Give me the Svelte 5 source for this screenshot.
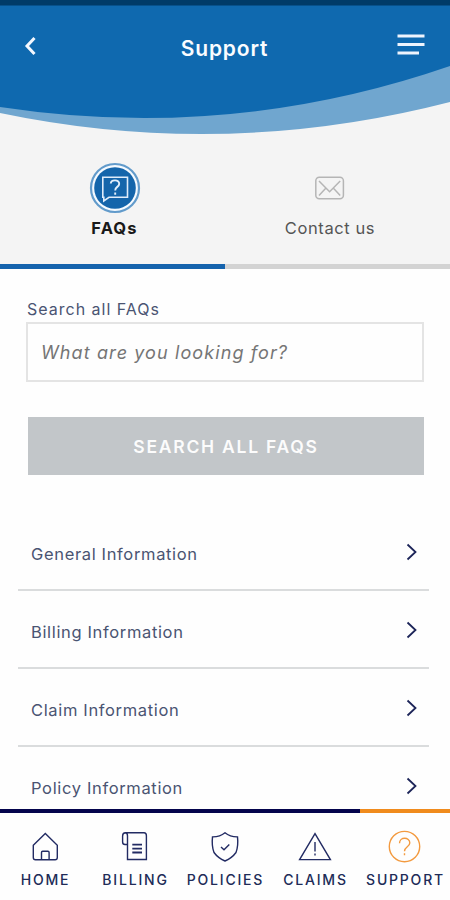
<script>
  const topics = [
    'General Information',
    'Billing Information',
    'Claim Information',
    'Policy Information',
  ]

  const navItems = [
    { id: 'home', label: 'Home' },
    { id: 'billing', label: 'Billing' },
    { id: 'policies', label: 'Policies' },
    { id: 'claims', label: 'Claims' },
    { id: 'support', label: 'Support' },
  ]

  let activeTab = 'faqs'
  let activeNav = 'support'
  let query = ''
</script>

<div class="app">
  <header>
    <svg class="wave" viewBox="0 0 450 140" width="450" height="140">
      <path d="M0 0H450V102Q225 160 0 113Z" fill="#70a6cf" />
      <path d="M0 0H450V66Q230 142 0 107Z" fill="#0f69af" />
      <path d="M0 0H450V5.5H0Z" fill="#003b68" />
    </svg>
    <button class="back" aria-label="Back">
      <svg width="12" height="20" viewBox="0 0 12 20">
        <path d="M10.5 2L3 10L10.5 18" fill="none" stroke="#f4f8ff" stroke-width="3" />
      </svg>
    </button>
    <h1>Support</h1>
    <button class="menu" aria-label="Menu">
      <svg width="28" height="22" viewBox="0 0 28 22">
        <path d="M0.5 3H27.5M0.5 11.5H27.5M0.5 20H22" stroke="#eef4fd" stroke-width="3" />
      </svg>
    </button>
  </header>

  <div class="tabs">
    <button class:active={activeTab === 'faqs'} on:click={() => (activeTab = 'faqs')}>
      <svg width="52" height="52" viewBox="0 0 52 52" fill="none">
        <circle cx="26" cy="26" r="24" fill="#f5faff" stroke="#629bcb" stroke-width="2.2" />
        <circle cx="26" cy="26" r="20.8" fill="#1465ab" />
        <path d="M13.8 15.2H38.5V35.3H20L14.8 39V35.3H13.8Z" stroke="#dfecfa" stroke-width="1.6" />
        <path d="M21.8 21.5C22 17.2 30.4 17.3 30.2 21.9C30 25.3 26.2 24.5 26.2 28.5M26.2 30.6V32.8" stroke="#e4effb" stroke-width="1.9" />
      </svg>
      <span>FAQs</span>
    </button>
    <button class:active={activeTab === 'contact'} on:click={() => (activeTab = 'contact')}>
      <svg width="52" height="52" viewBox="0 0 52 52" fill="none" stroke="#b5b5b5" stroke-width="1.5">
        <rect x="11.8" y="15.2" width="27.6" height="21.6" rx="3.5" />
        <path d="M15 19L25.6 29.8L36.2 19M15 33.5L21.5 26.5M36.2 33.5L29.7 26.5" />
      </svg>
      <span>Contact us</span>
    </button>
  </div>

  <main>
    <form on:submit|preventDefault>
      <label for="search">Search all FAQs</label>
      <input id="search" bind:value={query} placeholder="What are you looking for?" />
      <button>Search all FAQs</button>
    </form>
    <ul>
      {#each topics as topic}
        <li>
          <span>{topic}</span>
          <svg width="12" height="18" viewBox="0 0 12 18">
            <path d="M1.5 1.5L9.5 9L1.5 16.5" fill="none" stroke="#1c2458" stroke-width="1.8" />
          </svg>
        </li>
      {/each}
    </ul>
  </main>

  <nav>
    {#each navItems as item}
      <button class:active={activeNav === item.id} on:click={() => (activeNav = item.id)}>
        <svg width="34" height="34" viewBox="0 0 34 34" fill="none" stroke="currentColor" stroke-width="1.4">
          {#if item.id === 'home'}
            <path d="M5.3 15.3L17.3 3.5L29.3 15.3V27.5Q29.3 29.7 27.1 29.7H7.5Q5.3 29.7 5.3 27.5Z" />
            <path d="M13.5 29.5V22.5Q13.5 21.3 14.7 21.3H19.9Q21.1 21.3 21.1 22.5V29.5" />
          {:else if item.id === 'billing'}
            <path d="M9.5 29.5V5.8Q9.5 2.8 7 2.8H26Q28.4 2.8 28.4 5.8V29.5Z" />
            <path d="M9.5 14.5H7Q4.6 14.5 4.6 12V6Q4.6 2.8 7.4 2.8" />
            <path d="M14.3 14.7H24M14.3 18.6H24M14.3 22.5H24" stroke-width="1.8" />
          {:else if item.id === 'policies'}
            <path d="M17 2.8Q22 7 29.5 6.9Q30.5 16 28 22.5Q24 28 17 31Q10 28 6 22.5Q3.5 16 4.5 6.9Q12 7 17 2.8Z" />
            <path d="M13 17L16 19.8L21.3 14.5" />
          {:else if item.id === 'claims'}
            <path d="M17 3.6L32.4 29.6H1.6Z" />
            <path d="M17 12V21.5M17 23.6V25.4" />
          {:else}
            <circle cx="16.5" cy="16.6" r="15.2" />
            <path d="M11.5 13.3C11.5 6.5 21.9 6.8 21.8 13C21.7 17 16.5 16.6 16.5 21.3M16.5 23.2V25.3" />
          {/if}
        </svg>
        <span>{item.label}</span>
      </button>
    {/each}
  </nav>
</div>

<style>
  :global(body) {
    margin: 0;
  }
  .app {
    width: 450px;
    height: 900px;
    display: flex;
    flex-direction: column;
    overflow: hidden;
    background: #fefefe;
    color: #4a5472;
    font-family: Inter, 'Liberation Sans', sans-serif;
  }
  button {
    padding: 0;
    border: 0;
    background: none;
    color: inherit;
    font-family: inherit;
    cursor: pointer;
  }
  svg {
    display: block;
  }
  header {
    position: relative;
    box-sizing: border-box;
    flex: none;
    height: 140px;
    padding: 33px 25px 0 24px;
    display: grid;
    grid-template-columns: 28px 1fr 28px;
    align-items: start;
    background: #f4f4f4;
  }
  .wave {
    position: absolute;
    top: 0;
    left: 0;
  }
  h1,
  .back,
  .menu {
    position: relative;
  }
  .back {
    padding-top: 3px;
  }
  h1 {
    margin: 0;
    color: #fafcff;
    font-size: 21px;
    line-height: 32px;
    font-weight: 600;
    letter-spacing: 0.85px;
    text-align: center;
  }
  .tabs {
    flex: none;
    height: 129px;
    display: grid;
    grid-template-columns: 1fr 1fr;
    background: #f4f4f4;
  }
  .tabs button {
    box-sizing: border-box;
    display: flex;
    flex-direction: column;
    align-items: center;
    padding-top: 22px;
    border-bottom: 5px solid #d3d3d3;
    color: #555;
    font-size: 16.5px;
    line-height: 20px;
    letter-spacing: 0.6px;
  }
  .tabs button:first-child {
    padding-left: 4px;
  }
  .tabs button:last-child {
    padding-right: 15px;
  }
  .tabs span {
    margin-top: 4px;
  }
  .tabs .active {
    border-color: #1563ad;
    color: #191919;
    font-weight: 700;
    letter-spacing: 1.1px;
  }
  main {
    flex: 1;
    min-height: 0;
    overflow: hidden;
  }
  form {
    display: flex;
    flex-direction: column;
    padding: 30px 26px 0;
  }
  label {
    padding-left: 1px;
    font-size: 16px;
    line-height: 20px;
    letter-spacing: 1px;
  }
  input {
    box-sizing: border-box;
    height: 60px;
    margin-top: 3px;
    padding: 1px 13px 0;
    border: 2px solid #e4e4e4;
    background: #fefefe;
    color: #555;
    font-family: inherit;
    font-size: 18px;
    font-style: italic;
    letter-spacing: 1.1px;
  }
  input::placeholder {
    color: #757575;
    opacity: 1;
  }
  form button {
    height: 58px;
    margin: 35px 0 0 2px;
    background: #c2c6c9;
    color: #fcfcfc;
    font-size: 17.5px;
    font-weight: 600;
    letter-spacing: 1.75px;
    text-transform: uppercase;
  }
  ul {
    margin: 38px 21px 0 18px;
    padding: 0;
    list-style: none;
  }
  li {
    box-sizing: border-box;
    height: 78px;
    display: flex;
    justify-content: space-between;
    align-items: flex-start;
    padding: 30px 11px 0 13px;
    border-bottom: 2px solid #dadcdd;
    font-size: 16.5px;
    line-height: 22px;
    letter-spacing: 0.65px;
  }
  nav {
    flex: none;
    height: 91px;
    display: grid;
    grid-template-columns: repeat(5, 90px);
    background: #fefefe;
  }
  nav button {
    box-sizing: border-box;
    display: flex;
    flex-direction: column;
    align-items: center;
    padding-top: 17px;
    border-top: 4px solid #04044c;
    color: #222b63;
  }
  nav span {
    margin: 7px -6px 0 -5px;
    color: #202b57;
    font-size: 14px;
    line-height: 17px;
    font-weight: 500;
    letter-spacing: 1.8px;
    text-transform: uppercase;
    white-space: nowrap;
  }
  nav .active {
    border-color: #f08b1d;
    color: #f39a3f;
  }
</style>
